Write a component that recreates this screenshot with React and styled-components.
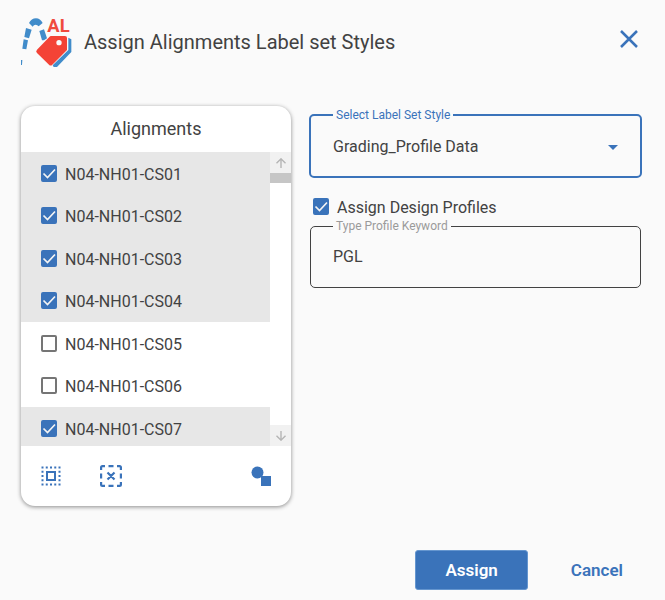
import React, { useRef, useState } from "react";
import styled, { createGlobalStyle } from "styled-components";

const blue = "#3a73ba";
const ink = "#424242";

const GlobalStyle = createGlobalStyle`
  * { box-sizing: border-box; }
  body { margin: 0; background: #fafafa; }
  body, button, input, select { font-family: Roboto, sans-serif; color: ${ink}; }
`;

const Dialog = styled.main`
  display: flex;
  flex-direction: column;
  min-height: 100vh;
  padding: 16px 23px 10px 21px;
`;

const Header = styled.header`
  display: flex;
  align-items: center;
  gap: 12px;
  height: 52px;
`;

const Title = styled.h1`
  flex: 1;
  margin: 0;
  font-size: 20px;
  line-height: 24px;
  font-weight: 400;
`;

const IconButton = styled.button`
  display: grid;
  place-items: center;
  padding: 0;
  border: 0;
  background: none;
  color: ${blue};
  cursor: pointer;
`;

const CloseButton = styled(IconButton)`
  width: 26px;
  height: 24px;
  margin-bottom: 6px;
`;

const Body = styled.div`
  display: grid;
  grid-template-columns: minmax(0, 270fr) minmax(0, 333fr);
  gap: 18px;
  align-items: start;
  margin-top: 38px;
`;

const Card = styled.section`
  overflow: hidden;
  border-radius: 14px;
  background: #fff;
  box-shadow: 0 1px 4px rgba(0, 0, 0, 0.45);
`;

const CardTitle = styled.h2`
  margin: 0;
  padding: 11px 0;
  font-size: 18px;
  line-height: 24px;
  font-weight: 400;
  text-align: center;
`;

const ScrollArea = styled.div`
  display: grid;
  grid-template-columns: 1fr 21px;
  height: 294px;
`;

const List = styled.ul`
  display: grid;
  grid-auto-rows: 43px 42px;
  margin: 0;
  padding: 0;
  overflow-y: auto;
  list-style: none;
  scrollbar-width: none;
`;

const Row = styled.li`
  display: flex;
  padding: 2px 0 0 20px;
  background: ${(p) => (p.$selected ? "#e7e7e7" : "#fff")};
`;

const Rail = styled.div`
  display: flex;
  flex-direction: column;
  justify-content: space-between;
`;

const RailButton = styled(IconButton)`
  width: 100%;
  height: 21px;
  background: #f1f1f1;
  color: #b5b5b5;
`;

const Thumb = styled.div`
  height: 10px;
  background: #c6c6c6;
`;

const CheckLabel = styled.label`
  display: flex;
  align-items: center;
  gap: 8px;
  font-size: 16px;
  line-height: 20px;
  cursor: pointer;
`;

const BoxFrame = styled.span`
  display: grid;
  width: 16px;
  height: 17px;
  margin-bottom: 3px;
  > * { grid-area: 1 / 1; }
  svg { pointer-events: none; }
`;

const BoxInput = styled.input`
  appearance: none;
  width: 16px;
  height: 17px;
  margin: 0;
  border: 2px solid #757575;
  border-radius: 2px;
  &:checked { border-color: ${blue}; background: ${blue}; }
`;

const CardFooter = styled.footer`
  display: flex;
  align-items: center;
  gap: 36px;
  padding: 18px 18px;
`;

const ToolButton = styled(IconButton)`
  width: 24px;
  height: 24px;
  &:last-child { margin-left: auto; }
`;

const Form = styled.div`
  display: flex;
  flex-direction: column;
  padding-top: 2px;
`;

const Field = styled.fieldset`
  min-width: 0;
  margin: 0 ${(p) => (p.$active ? 0 : 1)}px;
  padding: 0 ${(p) => (p.$active ? "22px 3px" : "22px")};
  border: ${(p) => (p.$active ? `2px solid ${blue}` : `1px solid ${ink}`)};
  border-radius: 5px;
`;

const Legend = styled.legend`
  padding: 0 3px;
  font-size: 12px;
  line-height: 14px;
  color: ${(p) => (p.$active ? blue : "#9a9a9a")};
`;

const SelectFrame = styled.div`
  display: grid;
  align-items: center;
  > * { grid-area: 1 / 1; }
  svg { justify-self: end; pointer-events: none; }
`;

const Select = styled.select`
  appearance: none;
  width: 100%;
  height: 51px;
  padding: 0 0 2px;
  border: 0;
  outline: 0;
  background: none;
  font-size: 16px;
`;

const TextInput = styled.input`
  display: block;
  width: 100%;
  height: 54px;
  padding: 0 0 8px;
  border: 0;
  outline: 0;
  background: none;
  font-size: 16px;
`;

const OptionLine = styled.div`
  padding: 20px 0 1px 4px;
`;

const Actions = styled.footer`
  display: flex;
  justify-content: flex-end;
  gap: 24px;
  margin-top: auto;
`;

const ActionButton = styled.button`
  height: 40px;
  padding: 0 ${(p) => (p.$primary ? 29 : 18)}px 1px;
  border: 1px solid ${(p) => (p.$primary ? "#6596cf" : "transparent")};
  border-radius: 3px;
  background: ${(p) => (p.$primary ? blue : "transparent")};
  color: ${(p) => (p.$primary ? "#fff" : blue)};
  font-size: 17px;
  font-weight: 600;
  cursor: pointer;
`;

function Logo() {
  return (
    <svg width="51" height="52" viewBox="33 33 153 156" aria-hidden="true">
      <g fill="#418cca">
        <path d="M57 54q7-14 21-14 13 0 20 14l-12 10q-4-5-9-5-6 0-9 6z" />
        <path d="M48 69l17 5-8 26-14-4zM41 103l13 3-5 27-12-2zM33 165h4l-1 15h-3z" />
        <path d="M88 78l14-5 9 27-9 6h-6z" />
        <path d="M175 98l9 5v38l-43 45h-10l-3-5 47-46z" />
      </g>
      <path d="M123 93h42q6 0 6 6v36l-44 44q-5 5-10 0l-36-35q-5-5 0-10l37-38q2-3 5-3z" fill="#f44336" />
      <circle cx="147" cy="113" r="8" fill="#fafafa" />
      <text x="112" y="81" fontFamily="Roboto, sans-serif" fontSize="55" fontWeight="700" fill="#f04a3e">AL</text>
    </svg>
  );
}

function Checkbox({ children, ...props }) {
  return (
    <CheckLabel>
      <BoxFrame>
        <BoxInput type="checkbox" {...props} />
        {props.checked && (
          <svg width="16" height="17" viewBox="0 0 16 17" fill="none" stroke="#f4f4f4" strokeWidth="1.7">
            <path d="M2.5 8.5l4 4 7.5-8" />
          </svg>
        )}
      </BoxFrame>
      {children}
    </CheckLabel>
  );
}

const names = ["01", "02", "03", "04", "05", "06", "07"].map((n) => `N04-NH01-CS${n}`);

function Alignments() {
  const list = useRef(null);
  const [checked, setChecked] = useState([true, true, true, true, false, false, true]);
  const scroll = (top) => list.current.scrollBy({ top });
  return (
    <Card>
      <CardTitle>Alignments</CardTitle>
      <ScrollArea>
        <List ref={list}>
          {names.map((name, i) => (
            <Row key={name} $selected={checked[i]}>
              <Checkbox
                checked={checked[i]}
                onChange={() => setChecked(checked.map((c, j) => (j === i ? !c : c)))}
              >
                {name}
              </Checkbox>
            </Row>
          ))}
        </List>
        <Rail>
          <div>
            <RailButton aria-label="Scroll up" onClick={() => scroll(-43)}>
              <svg width="10" height="10" viewBox="0 0 10 10" fill="none" stroke="currentColor" strokeWidth="1.4">
                <path d="M5 10V1M.5 5.2L5 .8l4.5 4.4" />
              </svg>
            </RailButton>
            <Thumb />
          </div>
          <RailButton aria-label="Scroll down" onClick={() => scroll(43)}>
            <svg width="10" height="10" viewBox="0 0 10 10" fill="none" stroke="currentColor" strokeWidth="1.4">
              <path d="M5 0v9M.5 4.8L5 9.2l4.5-4.4" />
            </svg>
          </RailButton>
        </Rail>
      </ScrollArea>
      <CardFooter>
        <ToolButton aria-label="Select all" onClick={() => setChecked(names.map(() => true))}>
          <svg width="20" height="20" viewBox="0 0 20 20" fill="none" stroke="currentColor" strokeWidth="2">
            <path d="M.5 1.5h19M.5 18.5h19M1.5 .5v19M18.5 .5v19" strokeDasharray="2 2.25" />
            <path d="M6 6h8v8H6z" />
          </svg>
        </ToolButton>
        <ToolButton aria-label="Clear selection" onClick={() => setChecked(names.map(() => false))}>
          <svg width="22" height="22" viewBox="0 0 22 22" fill="none" stroke="currentColor" strokeWidth="2.2">
            <path d="M1.1 5V2.5q0-1.4 1.4-1.4H5M17 1.1h2.5q1.4 0 1.4 1.4V5M20.9 17v2.5q0 1.4-1.4 1.4H17M5 20.9H2.5q-1.4 0-1.4-1.4V17M8.5 1.1h5M8.5 20.9h5M1.1 8.5v5M20.9 8.5v5M7.5 7.5l7 7M14.5 7.5l-7 7" />
          </svg>
        </ToolButton>
        <ToolButton aria-label="Invert selection" onClick={() => setChecked(checked.map((c) => !c))}>
          <svg width="20" height="20" viewBox="0 0 20 20" fill="currentColor">
            <circle cx="6.5" cy="6.5" r="6" />
            <path d="M10 10h10v10H10z" />
          </svg>
        </ToolButton>
      </CardFooter>
    </Card>
  );
}

export default function App() {
  const [profiles, setProfiles] = useState(true);
  return (
    <Dialog>
      <GlobalStyle />
      <Header>
        <Logo />
        <Title>Assign Alignments Label set Styles</Title>
        <CloseButton aria-label="Close">
          <svg width="18" height="18" viewBox="0 0 18 18" stroke="currentColor" strokeWidth="2.5">
            <path d="M1 1l16 16M17 1L1 17" />
          </svg>
        </CloseButton>
      </Header>
      <Body>
        <Alignments />
        <Form>
          <Field $active>
            <Legend $active><label htmlFor="style">Select Label Set Style</label></Legend>
            <SelectFrame>
              <Select id="style"><option>Grading_Profile Data</option></Select>
              <svg width="10" height="5" viewBox="0 0 10 5" fill={blue}><path d="M0 0h10L5 5z" /></svg>
            </SelectFrame>
          </Field>
          <OptionLine>
            <Checkbox checked={profiles} onChange={() => setProfiles(!profiles)}>Assign Design Profiles</Checkbox>
          </OptionLine>
          <Field>
            <Legend><label htmlFor="keyword">Type Profile Keyword</label></Legend>
            <TextInput id="keyword" defaultValue="PGL" />
          </Field>
        </Form>
      </Body>
      <Actions>
        <ActionButton $primary>Assign</ActionButton>
        <ActionButton>Cancel</ActionButton>
      </Actions>
    </Dialog>
  );
}
